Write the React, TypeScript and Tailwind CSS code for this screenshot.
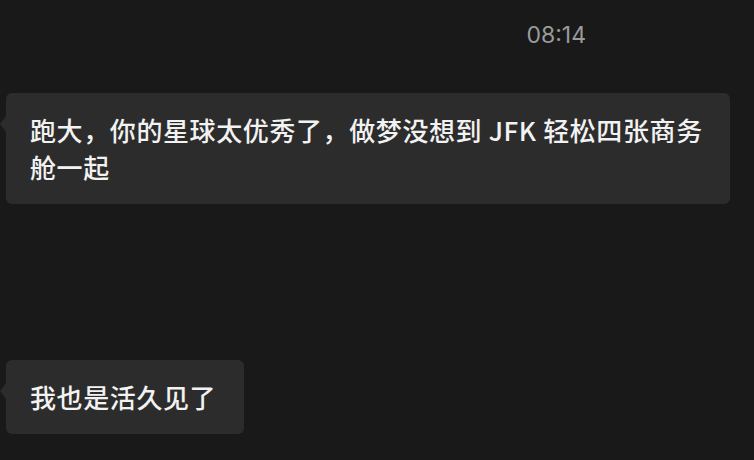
function Bubble({ children, className = '' }: { children: React.ReactNode; className?: string }) {
  return (
    <div className={`relative rounded-[6px] bg-[#2c2c2c] pb-[19px] pl-[24px] pt-[18px] ${className}`}>
      <span className="absolute left-[-6px] top-[23px] h-0 w-0 border-y-[8px] border-r-[6px] border-y-transparent border-r-[#2c2c2c]" />
      <p className="text-[26px] font-medium leading-[37px] tracking-[0.6px] text-[#f2f2f2]">{children}</p>
    </div>
  );
}

export default function App() {
  return (
    <div
      className="flex h-[460px] w-[754px] flex-col overflow-hidden bg-[#191919]"
      style={{ fontFamily: '"Noto Sans CJK SC", "Noto Sans", sans-serif' }}
    >
      <div className="flex justify-end pr-[168px] pt-[20px]">
        <span className="text-[23px] leading-[30px] text-[#9b9b9b]" style={{ fontFamily: 'Inter, "Noto Sans", sans-serif' }}>
          08:14
        </span>
      </div>
      <div className="ml-[6px] mt-[43px] flex flex-col items-start gap-[156px]">
        <Bubble className="w-[724px] pr-[12px]">跑大，你的星球太优秀了，做梦没想到 JFK 轻松四张商务舱一起</Bubble>
        <Bubble className="pr-[28px]">我也是活久见了</Bubble>
      </div>
    </div>
  );
}
